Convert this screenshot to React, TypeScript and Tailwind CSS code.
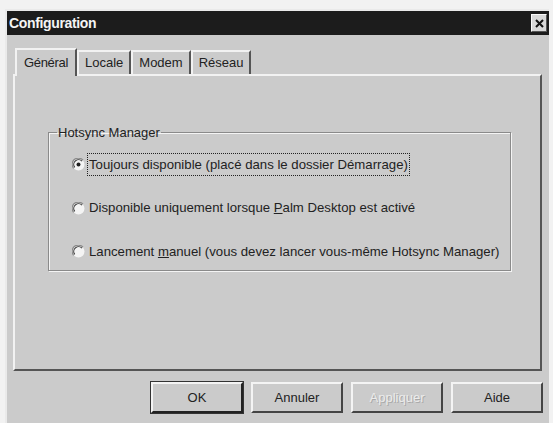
import React from 'react';

const font = { fontFamily: '"Liberation Sans", Arial, sans-serif' };

function Radio({ checked }: { checked?: boolean }) {
  return (
    <svg width="13" height="13" viewBox="0 0 13 13" className="shrink-0">
      <circle cx="6.5" cy="6.5" r="6" fill="#f4f4f4" />
      <path d="M11 2.2 A6 6 0 0 0 1.6 10.3" fill="none" stroke="#8a8a8a" strokeWidth="1.2" />
      <path d="M10 3.2 A4.8 4.8 0 0 0 2.7 9.4" fill="none" stroke="#333" strokeWidth="1.1" />
      {checked && <circle cx="6.5" cy="6.5" r="2" fill="#222" />}
    </svg>
  );
}

function Tab({ label, active }: { label: string; active?: boolean }) {
  return (
    <div
      className={
        active
          ? 'relative z-10 -mb-[2px] flex h-[28px] items-center border-t-2 border-l-2 border-r-2 border-t-[#f2f2f2] border-l-[#f2f2f2] border-r-[#555] bg-[#cbcbcb] px-[7px] text-[13px] tracking-tight text-[#222]'
          : 'mt-[3px] flex h-[24px] items-center border-t-2 border-l-2 border-r-2 border-t-[#f2f2f2] border-l-[#f2f2f2] border-r-[#555] px-[6px] text-[13px] text-[#222]'
      }
    >
      {label}
    </div>
  );
}

function Button({ label, primary, disabled }: { label: string; primary?: boolean; disabled?: boolean }) {
  return (
    <div
      className={
        'flex h-[31px] w-[92px] items-center justify-center bg-[#cbcbcb] text-[13px] ' +
        (primary
          ? 'border-2 border-t-[#f4f4f4] border-l-[#f4f4f4] border-r-[#222] border-b-[#222] outline outline-1 outline-[#333]'
          : 'border-2 border-t-[#f4f4f4] border-l-[#f4f4f4] border-r-[#444] border-b-[#444]') +
        (disabled ? ' text-[#ececec] [text-shadow:1px_1px_0_#a8a8a8]' : ' text-[#222]')
      }
    >
      {label}
    </div>
  );
}

export default function App() {
  return (
    <div className="h-[423px] w-[553px] overflow-hidden bg-[#f2f2f2] pl-[5px] pt-[9px]" style={font}>
      <div className="h-[420px] w-[544px] border-l-2 border-t-2 border-l-[#eaeaea] border-t-[#eaeaea] bg-[#cbcbcb]">
        {/* Title bar */}
        <div className="flex h-[24px] items-center justify-between bg-[#1c1c1c] pl-[2px] pr-[2px]">
          <span className="text-[14px] font-bold tracking-tight text-[#f4f4f4]">Configuration</span>
          <div className="flex h-[18px] w-[16px] items-center justify-center border border-t-[#fafafa] border-l-[#fafafa] border-r-[#555] border-b-[#555] bg-[#d8d8d8]">
            <svg width="9" height="9" viewBox="0 0 9 9">
              <path d="M1 1 L8 8 M8 1 L1 8" stroke="#111" strokeWidth="2" />
            </svg>
          </div>
        </div>

        {/* Tabs */}
        <div className="pl-[6px] pr-[6px] pt-[12px]">
          <div className="flex items-end pl-[2px]">
            <Tab label="Général" active />
            <Tab label="Locale" />
            <Tab label="Modem" />
            <Tab label="Réseau" />
          </div>

          {/* Tab panel */}
          <div className="h-[297px] w-[529px] border-2 border-t-[#f2f2f2] border-l-[#f2f2f2] border-r-[#555] border-b-[#555] pl-[33px] pr-[29px] pt-[47px]">
            <fieldset className="h-[148px] border border-[#8a8a8a] px-0 shadow-[1px_1px_0_#f4f4f4,inset_1px_1px_0_#f4f4f4]">
              <legend className="ml-[8px] px-[1px] text-[13px] text-[#222]">Hotsync Manager</legend>
              <div className="flex flex-col gap-[20px] pl-[23px] pt-[10px] text-[13.2px] text-[#222]">
                <div className="flex items-center gap-[2px]">
                  <Radio checked />
                  <span className="border border-dotted border-[#222] px-[1px] py-[1px]">
                    Toujours disponible (placé dans le dossier Démarrage)
                  </span>
                </div>
                <div className="flex items-center gap-[4px]">
                  <Radio />
                  <span className="py-[2px]">
                    Disponible uniquement lorsque <span className="underline">P</span>alm Desktop est activé
                  </span>
                </div>
                <div className="flex items-center gap-[4px]">
                  <Radio />
                  <span className="py-[2px]">
                    Lancement <span className="underline">m</span>anuel (vous devez lancer vous-même Hotsync Manager)
                  </span>
                </div>
              </div>
            </fieldset>
          </div>

          {/* Buttons */}
          <div className="flex justify-end gap-[8px] pt-[11px]">
            <Button label="OK" primary />
            <Button label="Annuler" />
            <Button label="Appliquer" disabled />
            <Button label="Aide" />
          </div>
        </div>
      </div>
    </div>
  );
}
